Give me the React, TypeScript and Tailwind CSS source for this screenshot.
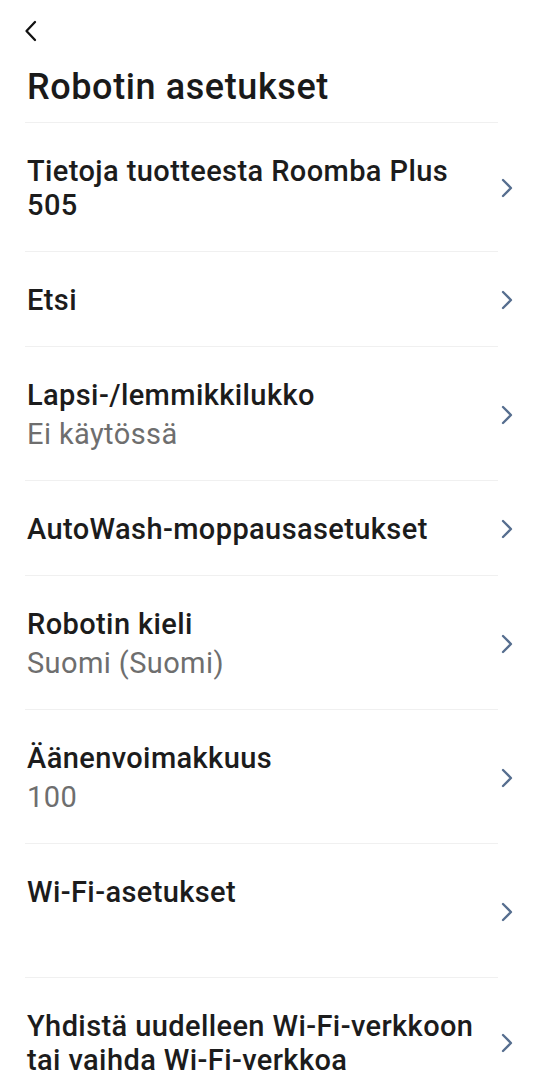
import React from 'react'

interface SettingRow {
  title: string
  subtitle?: string
  // reserve the subtitle line even when there's no value to show
  reserveSubtitle?: boolean
}

const rows: SettingRow[] = [
  { title: 'Tietoja tuotteesta Roomba Plus 505' },
  { title: 'Etsi' },
  { title: 'Lapsi-/lemmikkilukko', subtitle: 'Ei käytössä' },
  { title: 'AutoWash-moppausasetukset' },
  { title: 'Robotin kieli', subtitle: 'Suomi (Suomi)' },
  { title: 'Äänenvoimakkuus', subtitle: '100' },
  { title: 'Wi-Fi-asetukset', reserveSubtitle: true },
  { title: 'Yhdistä uudelleen Wi-Fi-verkkoon tai vaihda Wi-Fi-verkkoa' },
]

function ChevronRight() {
  return (
    <svg width="12" height="20" viewBox="0 0 12 20" fill="none" className="shrink-0 ml-[10px] -mr-[15px]">
      <path d="M2 2 L10 10 L2 18" stroke="#566e8f" strokeWidth="2.3" strokeLinecap="round" strokeLinejoin="round" />
    </svg>
  )
}

function BackIcon() {
  return (
    <svg width="14" height="22" viewBox="0 0 14 22" fill="none" className="block">
      <path d="M11 2 L2.5 11 L11 20" stroke="#111111" strokeWidth="2.3" strokeLinecap="round" strokeLinejoin="round" />
    </svg>
  )
}

export default function App() {
  return (
    <div className="min-h-screen w-full bg-white font-['Roboto',sans-serif] overflow-hidden">
      <div className="pl-[24px] pt-[20px]">
        <BackIcon />
      </div>
      <h1 className="pl-[27px] mt-[24px] mb-[14px] text-[36px] leading-[42px] tracking-[0.6px] font-[490] text-[#1a1a1a]">
        Robotin asetukset
      </h1>

      <div className="ml-[25px] mr-[52px]">
        {rows.map((row) => (
          <div
            key={row.title}
            className="flex items-center border-t border-[#f0f0f0] pt-[31px] pb-[29px]"
          >
            <div className="flex-1 min-w-0 pl-[2px] tracking-[0.4px]">
              <div className="text-[29px] leading-[34px] font-[490] text-[#1c1c1c]">
                {row.title}
              </div>
              {(row.subtitle || row.reserveSubtitle) && (
                <div className="text-[29px] leading-[34px] mt-[5px] text-[#6e6e6e] h-[34px]">
                  {row.subtitle}
                </div>
              )}
            </div>
            <ChevronRight />
          </div>
        ))}
      </div>
    </div>
  )
}
